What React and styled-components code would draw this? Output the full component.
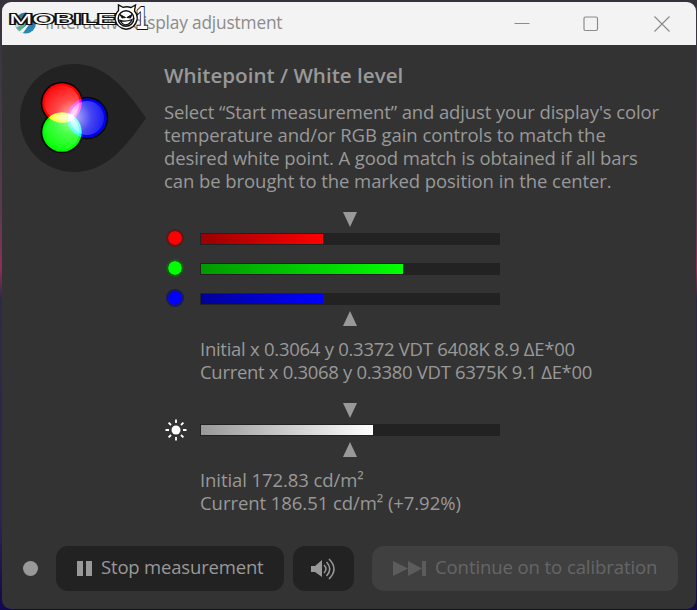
import styled, { createGlobalStyle } from "styled-components";

const GlobalStyle = createGlobalStyle`
  * {
    box-sizing: border-box;
  }

  body {
    margin: 0;
    overflow: hidden;
    font-family: "Open Sans", "Noto Sans", sans-serif;
  }
`;

const Desktop = styled.div`
  width: 697px;
  height: 610px;
  padding: 2px 1px 1px 2px;
  background: linear-gradient(
    #36323b 0%,
    #403846 15%,
    #5c3a50 35%,
    #8f2f58 44%,
    #2e2a44 49%,
    #2a2650 85%,
    #12084f 100%
  );
`;

const Window = styled.div`
  position: relative;
  display: flex;
  flex-direction: column;
  height: 607px;
  border-radius: 9px;
  overflow: hidden;
  background: #333;
`;

const TitleBar = styled.header`
  display: flex;
  align-items: center;
  height: 43px;
  padding-left: 11px;
  background: #f3f3f3;
  color: #8b8b8b;
`;

const Title = styled.span`
  flex: 1;
  margin: -1px 0 0 7px;
  font-size: 17.3px;
  line-height: 24px;
  white-space: nowrap;
  letter-spacing: ${(p) => p.$spacing}px;
`;

const Controls = styled.div`
  display: grid;
  grid-template-columns: 69px 71px 16px;
  margin-right: 26px;
`;

const Watermark = styled.svg`
  position: absolute;
  left: 5px;
  top: 1px;
  overflow: visible;
`;

const Main = styled.main`
  display: flex;
  flex: 1;
  padding: 18px 0 0 18px;
`;

const Tabs = styled.aside`
  width: 144px;
`;

const Content = styled.section`
  flex: 1;
  color: #999;
`;

const Heading = styled.h1`
  margin: 1px 0 13px;
  font-size: 20.6px;
  font-weight: 600;
  line-height: 23px;
  white-space: nowrap;
`;

const Line = styled.div`
  height: 23px;
  font-size: 18.5px;
  line-height: 23px;
  white-space: nowrap;
  letter-spacing: ${(p) => p.$spacing}px;
`;

const Meter = styled.div`
  width: 336px;
  margin-top: 20px;
`;

const Marker = styled.div`
  width: 0;
  height: 0;
  margin-left: 179px;
  border: 7.5px solid transparent;
  ${(p) =>
    p.$up
      ? "border-top: 0; border-bottom: 15px solid #999;"
      : "border-bottom: 0; border-top: 15px solid #999;"}
`;

const Rows = styled.div`
  margin: -3px 0;
`;

const Row = styled.div`
  display: flex;
  align-items: center;
  height: 30px;
`;

const IconBox = styled.div`
  display: flex;
  width: 36px;
`;

const Dot = styled.span`
  width: 18px;
  height: 18px;
  margin: 0 0 2px 2px;
  border: 2px solid ${(p) => p.$edge};
  border-radius: 50%;
  background: ${(p) => p.$color};
  background-clip: padding-box;
`;

const Track = styled.div`
  width: 300px;
  height: 12px;
  padding: 1px;
  background: #222;
`;

const Fill = styled.div`
  width: ${(p) => p.$width}px;
  height: 10px;
  background: linear-gradient(90deg, ${(p) => p.$from}, ${(p) => p.$to});
`;

const Readings = styled.div`
  margin: 11px 0 0 36px;
`;

const Footer = styled.footer`
  display: flex;
  align-items: center;
  height: 83px;
  padding: 2px 17px 0 21px;
`;

const Status = styled.span`
  width: 15px;
  height: 15px;
  margin-right: 18px;
  border-radius: 50%;
  background: #999;
`;

const Button = styled.button`
  display: flex;
  align-items: center;
  width: ${(p) => p.$width}px;
  height: 45px;
  margin: 0 ${(p) => p.$gap || 0}px 0 0;
  padding: 0 0 0 ${(p) => p.$pad}px;
  border: 0;
  border-radius: 12px;
  background: ${(p) => (p.disabled ? "#404040" : "#222")};
  color: ${(p) => (p.disabled ? "#666" : "#999")};
  font: 18.5px "Open Sans", "Noto Sans", sans-serif;
  white-space: nowrap;

  svg {
    flex: none;
  }
`;

const Label = styled.span`
  margin: -4px 0 0 9px;
  letter-spacing: ${(p) => p.$spacing}px;
`;

const channels = [
  { name: "red", color: "#f00", edge: "#5c1818", from: "#900", to: "#f00", width: 122 },
  { name: "green", color: "#0f0", edge: "#185c18", from: "#090", to: "#0f0", width: 202 },
  { name: "blue", color: "#00f", edge: "#18185c", from: "#009", to: "#00f", width: 122 },
];

const description = [
  ["Select “Start measurement” and adjust your display's color", -0.12],
  ["temperature and/or RGB gain controls to match the", -0.07],
  ["desired white point. A good match is obtained if all bars", -0.08],
  ["can be brought to the marked position in the center.", -0.07],
];

const AppIcon = () => (
  <svg width="25" height="25" viewBox="0 0 25 25">
    <defs>
      <linearGradient id="ball" x1="0" y1="0" x2="0" y2="1">
        <stop offset="0" stopColor="#39739c" />
        <stop offset="1" stopColor="#2589b8" />
      </linearGradient>
    </defs>
    <circle cx="12.5" cy="12" r="10.5" fill="url(#ball)" />
    <path d="M2 12 L12 4 L9 22 Q2 19 2 12Z" fill="#c9dcea" />
    <path d="M3 17 L15 9 L8 21Z" fill="#62ae88" />
    <path d="M6 21 L20 8 L10 22Z" fill="#eef8f6" />
  </svg>
);

const MobileMark = () => (
  <Watermark width="150" height="34" viewBox="0 0 150 34">
    <g
      fill="#fff"
      stroke="#111"
      strokeWidth="2.2"
      paintOrder="stroke"
      fontFamily="Liberation Sans, sans-serif"
      fontWeight="700"
    >
      <text x="2" y="20.5" fontSize="14" fontWeight="400" textLength="107" lengthAdjust="spacingAndGlyphs">
        MOBILE
      </text>
      <text transform="translate(129 26) scale(0.68 1)" fontSize="31">
        1
      </text>
    </g>
    <path
      d="M111.5 7.5 L111.5 2 L116 4.3 Q120 3.2 124 4.5 L128.5 2 L127.5 8 Q131 12 130 17 Q127.5 26 119 26.2 Q109.5 25 108 16 Q108 11 111.5 7.5Z"
      fill="#fff"
      stroke="#111"
      strokeWidth="1.4"
    />
    <circle cx="119" cy="15.5" r="7.8" fill="#fff" stroke="#111" strokeWidth="1.5" />
    <path d="M113 11.5 L118.5 14.5 L115 15Z M125 11.5 L119.8 14.5 L123.5 15Z" fill="#111" stroke="#111" />
    <path d="M113 17.5 Q119 19 125 16.5 Q123 22 118 22 Q115 21 113 17.5Z" fill="#fff" stroke="#111" strokeWidth="1.3" />
  </Watermark>
);

const WhitepointIcon = () => (
  <svg width="128" height="110" viewBox="0 0 128 110">
    <defs>
      <radialGradient id="shine" gradientUnits="userSpaceOnUse" cx="53" cy="54" r="36">
        <stop offset="0" stopColor="#fff" stopOpacity="0.75" />
        <stop offset="0.5" stopColor="#fff" stopOpacity="0.28" />
        <stop offset="1" stopColor="#fff" stopOpacity="0.05" />
      </radialGradient>
    </defs>
    <path d="M54 1 C84 1 103 22 126 55 C103 88 84 109 54 109 C24 109 0 85 0 55 C0 25 24 1 54 1Z" fill="#222" />
    <g fill="#060606">
      <circle cx="42" cy="40" r="21.3" />
      <circle cx="67" cy="55" r="21.3" />
      <circle cx="42" cy="69" r="21.3" />
    </g>
    <g style={{ isolation: "isolate" }}>
      <circle cx="67" cy="55" r="19.7" fill="#00e" />
      <circle cx="42" cy="40" r="19.7" fill="#f00" style={{ mixBlendMode: "screen" }} />
      <circle cx="42" cy="69" r="19.7" fill="#0f0" style={{ mixBlendMode: "screen" }} />
    </g>
    <g fill="url(#shine)">
      <circle cx="42" cy="40" r="17.5" />
      <circle cx="67" cy="55" r="17" />
      <circle cx="42" cy="69" r="17.5" />
    </g>
  </svg>
);

const SunIcon = () => (
  <svg width="24" height="24" viewBox="0 0 24 24">
    <circle cx="12" cy="12" r="4.5" fill="#fff" />
    <path
      d="M12 1.5V5M12 19V22.5M1.5 12H5M19 12H22.5M4.6 4.6L7 7M17 17L19.4 19.4M4.6 19.4L7 17M17 7L19.4 4.6"
      stroke="#fff"
      strokeWidth="1.8"
    />
  </svg>
);

const Bar = ({ width, from, to }) => (
  <Track>
    <Fill $width={width} $from={from} $to={to} />
  </Track>
);

const App = () => {
  return (
    <Desktop>
      <GlobalStyle />
      <Window>
        <TitleBar>
          <AppIcon />
          <Title $spacing={-0.17}>Interactive display adjustment</Title>
          <Controls>
            <svg width="16" height="16" viewBox="0 0 16 16">
              <path d="M0.5 7.5H15.5" stroke="#8b8b8b" />
            </svg>
            <svg width="16" height="16" viewBox="0 0 16 16" fill="none" stroke="#8b8b8b">
              <rect x="1" y="1" width="13.5" height="13.5" rx="1.5" strokeWidth="1.2" />
            </svg>
            <svg width="16" height="16" viewBox="0 0 16 16">
              <path d="M0.5 0.5L15.5 15.5M15.5 0.5L0.5 15.5" stroke="#8b8b8b" strokeWidth="1.2" />
            </svg>
          </Controls>
        </TitleBar>
        <Main>
          <Tabs>
            <WhitepointIcon />
          </Tabs>
          <Content>
            <Heading>Whitepoint / White level</Heading>
            {description.map(([text, spacing]) => (
              <Line key={text} $spacing={spacing}>
                {text}
              </Line>
            ))}
            <Meter>
              <Marker />
              <Rows>
                {channels.map((c) => (
                  <Row key={c.name}>
                    <IconBox>
                      <Dot $color={c.color} $edge={c.edge} />
                    </IconBox>
                    <Bar width={c.width} from={c.from} to={c.to} />
                  </Row>
                ))}
              </Rows>
              <Marker $up />
            </Meter>
            <Readings>
              <Line $spacing={-0.27}>Initial x 0.3064 y 0.3372 VDT 6408K 8.9 ΔE*00</Line>
              <Line $spacing={-0.31}>Current x 0.3068 y 0.3380 VDT 6375K 9.1 ΔE*00</Line>
            </Readings>
            <Meter>
              <Marker />
              <Rows>
                <Row>
                  <IconBox>
                    <SunIcon />
                  </IconBox>
                  <Bar width={172} from="#999" to="#fff" />
                </Row>
              </Rows>
              <Marker $up />
            </Meter>
            <Readings>
              <Line $spacing={-0.08}>Initial 172.83 cd/m²</Line>
              <Line $spacing={-0.06}>Current 186.51 cd/m² (+7.92%)</Line>
            </Readings>
          </Content>
        </Main>
        <Footer>
          <Status />
          <Button $width={228} $pad={21} $gap={9}>
            <svg width="15" height="15" viewBox="0 0 15 15" fill="#999">
              <path d="M0 0H6V15H0ZM9 0H15V15H9Z" />
            </svg>
            <Label $spacing={-0.18}>Stop measurement</Label>
          </Button>
          <Button $width={61} $pad={18} $gap={18} aria-label="Sound">
            <svg width="25" height="24" viewBox="0 0 25 24" fill="none" stroke="#999" strokeWidth="1.5">
              <path d="M0 9H4L11 3V20L4 15H0Z" fill="#999" stroke="none" />
              <path d="M13 8Q17 12 13 16M15.5 5Q22 12 15.5 19M18 2Q28 12 18 22" />
            </svg>
          </Button>
          <Button $width={306} $pad={21} disabled>
            <svg width="33" height="15" viewBox="0 0 33 15" fill="#5c5c5c">
              <path d="M0 0L15 7.5L0 15ZM15 0L29 7.5L15 15ZM29 0H33V15H29Z" />
            </svg>
            <Label $spacing={-0.08}>Continue on to calibration</Label>
          </Button>
        </Footer>
        <MobileMark />
      </Window>
    </Desktop>
  );
};

export default App;
